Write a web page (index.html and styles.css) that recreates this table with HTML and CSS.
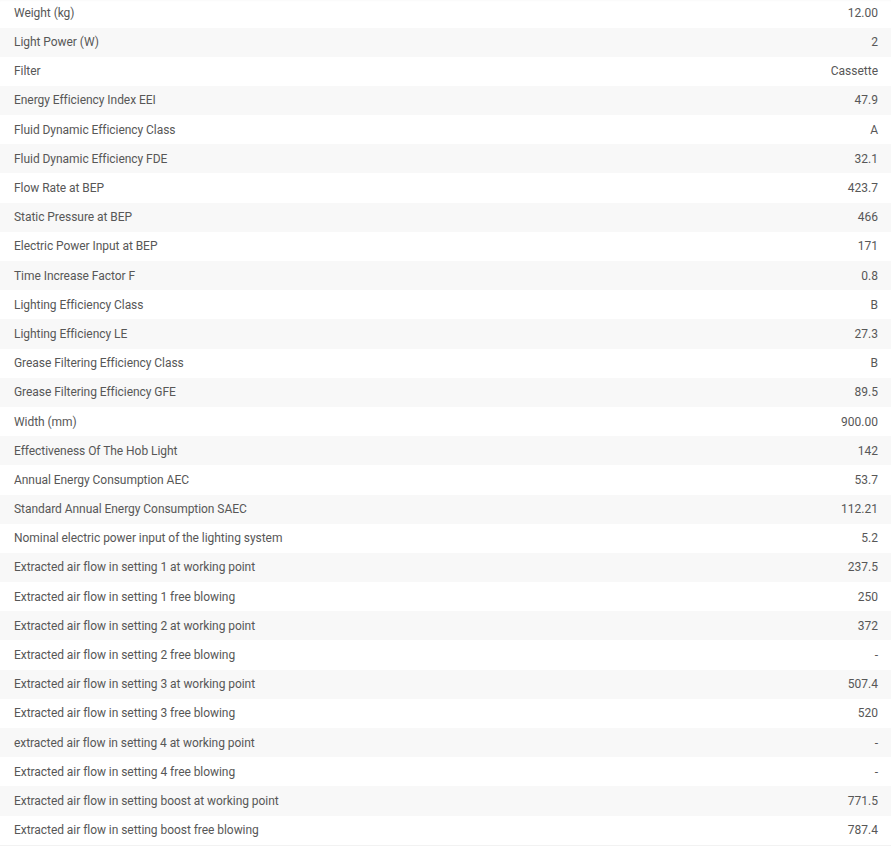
FILE: index.html
```html
<!DOCTYPE html>
<html>
<head>
<meta charset="utf-8">
<link rel="stylesheet" href="styles.css">
</head>
<body>
<div class="specs">
  <div class="row"><span class="label">Weight (kg)</span><span class="value">12.00</span></div>
  <div class="row"><span class="label">Light Power (W)</span><span class="value">2</span></div>
  <div class="row"><span class="label">Filter</span><span class="value">Cassette</span></div>
  <div class="row"><span class="label">Energy Efficiency Index EEI</span><span class="value">47.9</span></div>
  <div class="row"><span class="label">Fluid Dynamic Efficiency Class</span><span class="value">A</span></div>
  <div class="row"><span class="label">Fluid Dynamic Efficiency FDE</span><span class="value">32.1</span></div>
  <div class="row"><span class="label">Flow Rate at BEP</span><span class="value">423.7</span></div>
  <div class="row"><span class="label">Static Pressure at BEP</span><span class="value">466</span></div>
  <div class="row"><span class="label">Electric Power Input at BEP</span><span class="value">171</span></div>
  <div class="row"><span class="label">Time Increase Factor F</span><span class="value">0.8</span></div>
  <div class="row"><span class="label">Lighting Efficiency Class</span><span class="value">B</span></div>
  <div class="row"><span class="label">Lighting Efficiency LE</span><span class="value">27.3</span></div>
  <div class="row"><span class="label">Grease Filtering Efficiency Class</span><span class="value">B</span></div>
  <div class="row"><span class="label">Grease Filtering Efficiency GFE</span><span class="value">89.5</span></div>
  <div class="row"><span class="label">Width (mm)</span><span class="value">900.00</span></div>
  <div class="row"><span class="label">Effectiveness Of The Hob Light</span><span class="value">142</span></div>
  <div class="row"><span class="label">Annual Energy Consumption AEC</span><span class="value">53.7</span></div>
  <div class="row"><span class="label">Standard Annual Energy Consumption SAEC</span><span class="value">112.21</span></div>
  <div class="row"><span class="label">Nominal electric power input of the lighting system</span><span class="value">5.2</span></div>
  <div class="row"><span class="label">Extracted air flow in setting 1 at working point</span><span class="value">237.5</span></div>
  <div class="row"><span class="label">Extracted air flow in setting 1 free blowing</span><span class="value">250</span></div>
  <div class="row"><span class="label">Extracted air flow in setting 2 at working point</span><span class="value">372</span></div>
  <div class="row"><span class="label">Extracted air flow in setting 2 free blowing</span><span class="value">-</span></div>
  <div class="row"><span class="label">Extracted air flow in setting 3 at working point</span><span class="value">507.4</span></div>
  <div class="row"><span class="label">Extracted air flow in setting 3 free blowing</span><span class="value">520</span></div>
  <div class="row"><span class="label">extracted air flow in setting 4 at working point</span><span class="value">-</span></div>
  <div class="row"><span class="label">Extracted air flow in setting 4 free blowing</span><span class="value">-</span></div>
  <div class="row"><span class="label">Extracted air flow in setting boost at working point</span><span class="value">771.5</span></div>
  <div class="row"><span class="label">Extracted air flow in setting boost free blowing</span><span class="value">787.4</span></div>
</div>
</body>
</html>
```
FILE: styles.css
```css
html, body {
  margin: 0;
  padding: 0;
  background: #ffffff;
}
body {
  font-family: Roboto, "Liberation Sans", sans-serif;
  font-size: 12px;
  color: #575757;
  overflow: hidden;
}
.specs {
  margin-top: -1.7px;
  border-bottom: 1px solid #f2f2f2;
}
.row {
  display: flex;
  justify-content: space-between;
  align-items: center;
  height: 29.2px;
  padding: 0 13px 0 14px;
}
.row:first-child {
  box-shadow: inset 0 4px 3px -2px rgba(0, 0, 0, 0.05);
}
.row:nth-child(even) {
  background: #f8f8f8;
}
.label {
  letter-spacing: -0.05px;
}
```
